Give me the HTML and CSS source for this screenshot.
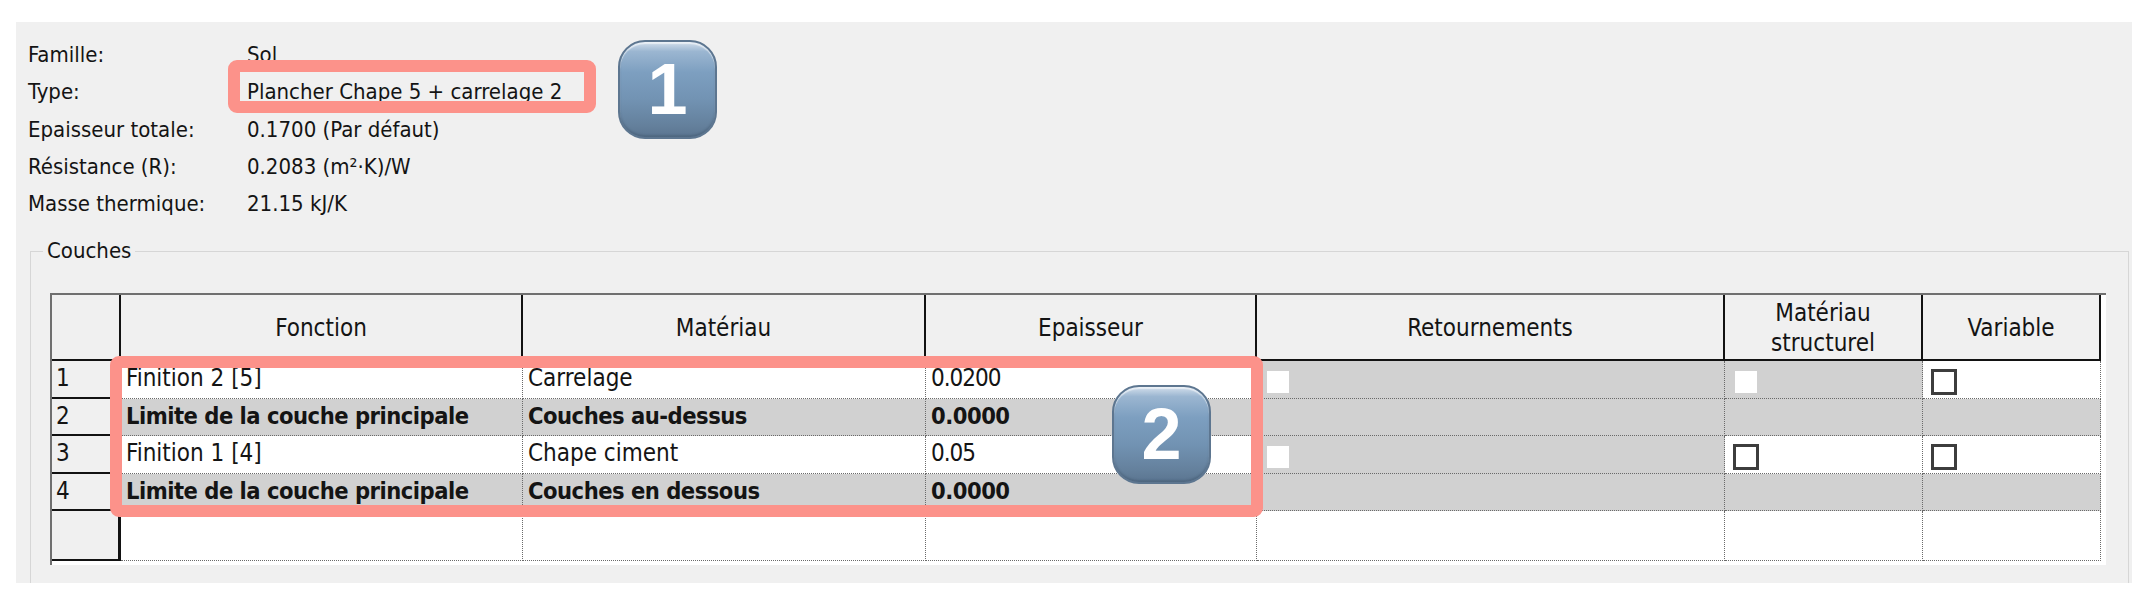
FILE: index.html
```html
<!DOCTYPE html>
<html lang="fr">
<head>
<meta charset="utf-8">
<title>Couches</title>
<link rel="stylesheet" href="styles.css">
</head>
<body>
<div class="panel">
  <div class="props">
    <span class="k">Famille:</span><span class="v">Sol</span>
    <span class="k">Type:</span><span class="v">Plancher Chape 5 + carrelage 2</span>
    <span class="k">Epaisseur totale:</span><span class="v">0.1700 (Par défaut)</span>
    <span class="k">Résistance (R):</span><span class="v">0.2083 (m²·K)/W</span>
    <span class="k">Masse thermique:</span><span class="v">21.15 kJ/K</span>
  </div>
  <fieldset class="group">
    <legend>Couches</legend>
    <div class="frame">
      <div class="grid">
        <div class="th"></div>
        <div class="th">Fonction</div>
        <div class="th">Matériau</div>
        <div class="th">Epaisseur</div>
        <div class="th">Retournements</div>
        <div class="th">Matériau<br>structurel</div>
        <div class="th">Variable</div>

        <div class="rn">1</div>
        <div class="td">Finition 2 [5]</div>
        <div class="td">Carrelage</div>
        <div class="td num">0.0200</div>
        <div class="td gray"><span class="off"></span></div>
        <div class="td gray"><span class="off"></span></div>
        <div class="td"><span class="chk"></span></div>

        <div class="rn">2</div>
        <div class="td gray b">Limite de la couche principale</div>
        <div class="td gray b">Couches au-dessus</div>
        <div class="td gray b">0.0000</div>
        <div class="td gray"></div>
        <div class="td gray"></div>
        <div class="td gray"></div>

        <div class="rn">3</div>
        <div class="td">Finition 1 [4]</div>
        <div class="td">Chape ciment</div>
        <div class="td num">0.05</div>
        <div class="td gray"><span class="off"></span></div>
        <div class="td"><span class="chk"></span></div>
        <div class="td"><span class="chk"></span></div>

        <div class="rn">4</div>
        <div class="td gray b">Limite de la couche principale</div>
        <div class="td gray b">Couches en dessous</div>
        <div class="td gray b">0.0000</div>
        <div class="td gray"></div>
        <div class="td gray"></div>
        <div class="td gray"></div>

        <div class="rn"></div>
        <div class="td"></div>
        <div class="td"></div>
        <div class="td"></div>
        <div class="td"></div>
        <div class="td"></div>
        <div class="td"></div>
      </div>
    </div>
  </fieldset>
</div>

<div class="callout c1"></div>
<div class="badge b1">1</div>
<div class="callout c2"></div>
<div class="badge b2">2</div>
</body>
</html>
```
FILE: styles.css
```css
html, body {
  margin: 0;
  padding: 0;
  background: #ffffff;
}
body {
  position: relative;
  width: 2146px;
  height: 590px;
  overflow: hidden;
  font-family: "DejaVu Sans", "Noto Sans", sans-serif;
  font-stretch: condensed;
  color: #141414;
}

.panel {
  margin: 22px 0 0 16px;
  width: 2116px;
  height: 561px;
  background: #f0f0f0;
  overflow: hidden;
}

/* properties */
.props {
  display: grid;
  grid-template-columns: 219px auto;
  padding: 14px 0 0 12px;
  font-size: 22px;
  line-height: 37.25px;
}

/* group box */
.group {
  margin: 17px 3px 0 14px;
  padding: 30px 0 40px 19px;
  border: 1px solid #d6d6d6;
  min-width: 0;
}
.group legend {
  margin-left: -7px;
  padding: 0 4px;
  font-size: 22px;
  line-height: 24px;
}

/* table */
.frame {
  display: inline-block;
  background: #ffffff;
  border-top: 2px solid #6f6f6f;
  border-left: 2px solid #6f6f6f;
  padding: 0 5px 4px 0;
}
.grid {
  display: grid;
  grid-template-columns: 69px 402px 403px 331px 468px 198px 178px;
  grid-template-rows: 66px 38px 37px 38px 37px 50px;
  font-size: 24px;
  line-height: 27px;
}
.grid > div {
  box-sizing: border-box;
  min-width: 0;
  overflow: hidden;
  white-space: nowrap;
}
.th {
  background: #f0f0f0;
  border-right: 2px solid #121212;
  border-bottom: 2px solid #121212;
  display: flex;
  align-items: center;
  justify-content: center;
  text-align: center;
  line-height: 30px;
  padding-top: 2px;
}
.rn {
  background: #f0f0f0;
  border-right: 3px solid #121212;
  border-bottom: 2px solid #121212;
  padding: 4px 0 0 4px;
}
.td {
  background: #ffffff;
  border-right: 1px dotted #6a6a6a;
  border-bottom: 1px dotted #6a6a6a;
  padding: 4px 0 0 5px;
}
.td.gray {
  background: #d1d1d1;
}
.td.b {
  font-weight: bold;
  font-size: 23.5px;
  letter-spacing: -0.5px;
}
.td.num {
  letter-spacing: -1px;
}

/* check boxes */
.off {
  display: block;
  width: 22px;
  height: 22px;
  margin: 6px 0 0 5px;
  background: #ffffff;
}
.chk {
  display: block;
  box-sizing: border-box;
  width: 26px;
  height: 26px;
  margin: 4px 0 0 3px;
  background: #ffffff;
  border: 3px solid #3d3d3d;
}

/* annotation overlays */
.callout {
  position: absolute;
  box-sizing: border-box;
  border: 12px solid #fc928a;
  border-radius: 9px;
}
.c1 {
  left: 228px;
  top: 60px;
  width: 368px;
  height: 53px;
}
.c2 {
  left: 110px;
  top: 356px;
  width: 1153px;
  height: 161px;
}
.badge {
  position: absolute;
  box-sizing: border-box;
  width: 99px;
  height: 99px;
  border-radius: 27px;
  border: 2px solid #5d7690;
  background: linear-gradient(180deg, #d3dfec 0%, #9bb6d1 10%, #7d9fc0 32%, #7293b3 60%, #64809c 88%, #5b7590 100%);
  box-shadow: inset 0 2px 1px rgba(255, 255, 255, 0.55), inset 0 -2px 2px rgba(40, 60, 80, 0.25);
  color: #ffffff;
  font-family: "Liberation Sans", Arial, sans-serif;
  font-stretch: normal;
  font-weight: bold;
  font-size: 72px;
  line-height: 95px;
  text-align: center;
}
.b1 {
  left: 618px;
  top: 40px;
}
.b2 {
  left: 1112px;
  top: 385px;
}
```
